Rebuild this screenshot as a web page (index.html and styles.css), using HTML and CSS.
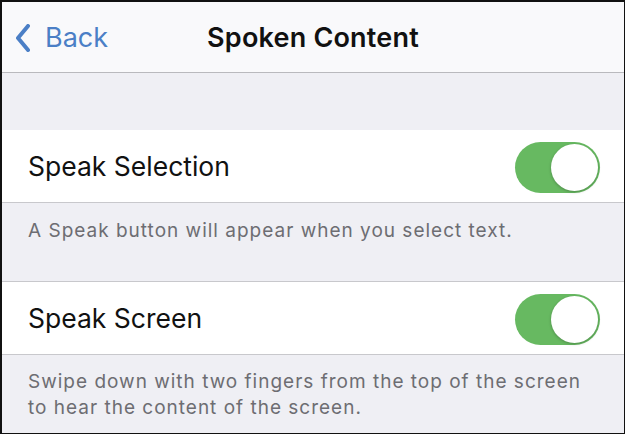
FILE: index.html
```html
<!DOCTYPE html>
<html lang="en">
<head>
  <meta charset="UTF-8">
  <meta name="viewport" content="width=device-width, initial-scale=1.0">
  <link rel="stylesheet" href="styles.css">
  <title>Spoken Content</title>
</head>
<body>

  <div class="screen">
    <!-- 상단 네비게이션 -->
    <div class="nav-bar">
      <a class="back" href="#">
        <svg class="chevron" width="14" height="28" viewBox="0 0 14 28">
          <path d="M12 2 L2 14 L12 26" fill="none" stroke="currentColor" stroke-width="4" stroke-linecap="round" stroke-linejoin="round"/>
        </svg>
        <span>Back</span>
      </a>
      <div class="nav-title">Spoken Content</div>
    </div>

    <div class="group-gap"></div>

    <!-- Speak Selection -->
    <div class="cell">
      <span class="cell-label">Speak Selection</span>
      <label class="switch">
        <input type="checkbox" checked>
        <span class="knob"></span>
      </label>
    </div>
    <div class="group-footer">A Speak button will appear when you select text.</div>

    <!-- Speak Screen -->
    <div class="cell">
      <span class="cell-label">Speak Screen</span>
      <label class="switch">
        <input type="checkbox" checked>
        <span class="knob"></span>
      </label>
    </div>
    <div class="group-footer last">Swipe down with two fingers from the top of the screen to hear the content of the screen.</div>
  </div>

</body>
</html>
```

FILE: styles.css
```css
body {
  margin: 0;
  background-color: #fff;
  font-family: 'Inter', 'Liberation Sans', Arial, sans-serif;
}

.screen {
  box-sizing: border-box;
  width: 625px;
  height: 434px;
  border: 2px solid #111;
  border-right-width: 1px;
  border-bottom-width: 1px;
  overflow: hidden;
  background-color: #efeff4;
}

.nav-bar {
  position: relative;
  display: flex;
  align-items: center;
  height: 70px;
  background-color: #f9f9fb;
  border-bottom: 1px solid #b9b9bd;
}

.back {
  display: flex;
  align-items: center;
  gap: 15px;
  padding-left: 14px;
  color: #4b7fc6;
  text-decoration: none;
  font-size: 27px;
}

.chevron {
  margin-top: 1px;
}

.nav-title {
  position: absolute;
  left: 0;
  right: 0;
  text-align: center;
  pointer-events: none;
  font-size: 27px;
  font-weight: 600;
  letter-spacing: 0.2px;
  color: #111;
}

.group-gap {
  height: 57px;
}

.cell {
  display: flex;
  align-items: center;
  justify-content: space-between;
  height: 72px;
  padding: 0 24px 0 26px;
  background-color: #fff;
}

.cell-label {
  font-size: 26.5px;
  color: #111;
}

.switch {
  position: relative;
  display: block;
  width: 85px;
  height: 51px;
  margin-top: 2px;
}

.switch input {
  display: none;
}

.knob {
  display: block;
  width: 100%;
  height: 100%;
  border-radius: 26px;
  background-color: #67b961;
}

.knob::after {
  content: "";
  position: absolute;
  top: 2px;
  right: 2px;
  width: 47px;
  height: 47px;
  border-radius: 50%;
  background-color: #fff;
  box-shadow: 0 1px 3px rgba(0, 0, 0, 0.25);
}

.group-footer {
  box-sizing: border-box;
  height: 80px;
  padding: 15px 38px 0 26px;
  border-top: 1px solid #c8c8cc;
  border-bottom: 1px solid #c8c8cc;
  font-size: 19px;
  line-height: 26px;
  letter-spacing: 1px;
  color: #6d6d72;
}

.group-footer.last {
  border-bottom: none;
  padding-top: 14px;
}
```
